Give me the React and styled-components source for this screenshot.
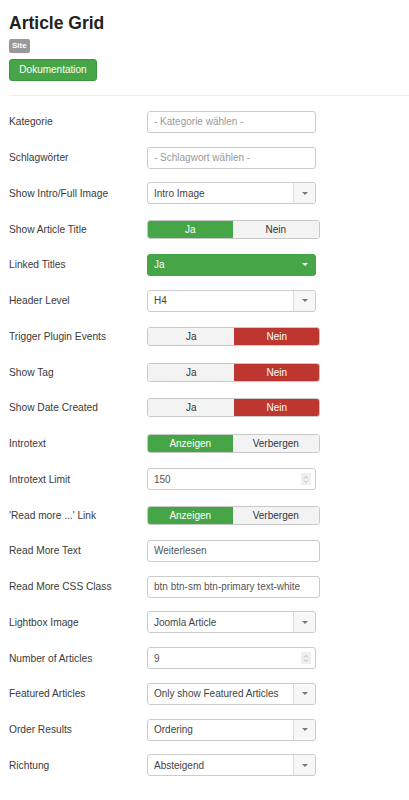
import React from 'react';
import styled, {createGlobalStyle} from 'styled-components';

const Global = createGlobalStyle`
    html, body { margin: 0; padding: 0; background: #fff; }
    body { font-family: "Liberation Sans", Arial, sans-serif; color: #333; }
`;

const Page = styled.div`
    width: 409px;
    padding: 12px 0 0 9px;
    box-sizing: border-box;
`;

const Title = styled.h1`
    margin: 0;
    font-size: 17.5px;
    line-height: 22px;
    font-weight: bold;
    color: #222;
`;

const Badge = styled.span`
    display: inline-block;
    margin-top: 2px;
    padding: 0 3px;
    height: 14px;
    line-height: 14px;
    border-radius: 2px;
    background: #999;
    color: #fff;
    font-size: 8px;
    font-weight: bold;
`;

const DocButton = styled.div`
    margin-top: 6px;
    width: 88px;
    height: 22px;
    line-height: 20px;
    text-align: center;
    border-radius: 3px;
    background: #46a546;
    border: 1px solid #3d963d;
    box-sizing: border-box;
    color: #fff;
    font-size: 10px;
`;

const Divider = styled.hr`
    margin: 14px 0 0 0;
    border: 0;
    border-top: 1px solid #eee;
`;

const Form = styled.div`
    display: flex;
    flex-direction: column;
    margin-top: 8px;
`;

const Row = styled.div`
    display: flex;
    align-items: center;
    height: 35.75px;
`;

const Label = styled.div`
    width: 138px;
    font-size: 10.2px;
    color: #3a3a3a;
`;

const Input = styled.div`
    width: ${p => p.$w || 169}px;
    height: 22px;
    box-sizing: border-box;
    border: 1px solid #ccc;
    border-radius: 3px;
    background: #fff;
    display: flex;
    align-items: center;
    padding-left: 6px;
    font-size: 10px;
    color: ${p => (p.$placeholder ? '#999' : '#555')};
    position: relative;
`;

const Select = styled.div`
    width: 169px;
    height: 22px;
    box-sizing: border-box;
    border: 1px solid ${p => (p.$green ? '#46a546' : '#ccc')};
    border-radius: 3px;
    background: ${p => (p.$green ? '#46a546' : '#fff')};
    color: ${p => (p.$green ? '#fff' : '#444')};
    display: flex;
    font-size: 10px;
`;

const SelectValue = styled.div`
    flex: 1;
    display: flex;
    align-items: center;
    padding-left: 6px;
`;

const SelectArrow = styled.div`
    width: 21px;
    display: flex;
    align-items: center;
    justify-content: center;
    background: ${p => (p.$green ? 'transparent' : '#f7f7f7')};
    border-left: 1px solid ${p => (p.$green ? 'transparent' : '#ddd')};
    border-radius: 0 3px 3px 0;
    &::after {
        content: '';
        border-left: 3px solid transparent;
        border-right: 3px solid transparent;
        border-top: 3px solid ${p => (p.$green ? '#fff' : '#777')};
    }
`;

const Toggle = styled.div`
    width: 173px;
    height: 19px;
    display: flex;
    border-radius: 3px;
    overflow: hidden;
    box-sizing: border-box;
    border: 1px solid #c8c8c8;
    font-size: 10px;
`;

const Half = styled.div`
    flex: 1;
    display: flex;
    align-items: center;
    justify-content: center;
    background: ${p => p.$bg};
    color: ${p => (p.$active ? '#fff' : '#333')};
    margin: ${p => (p.$active ? '-1px' : '0')};
`;

const Spinner = styled.div`
    position: absolute;
    right: 4px;
    top: 4px;
    width: 10px;
    height: 12px;
    background: #f0f0f0;
    display: flex;
    align-items: center;
    justify-content: center;
`;

const fields = [
    {label: 'Kategorie', type: 'input', value: '- Kategorie wählen -', placeholder: true},
    {label: 'Schlagwörter', type: 'input', value: '- Schlagwort wählen -', placeholder: true},
    {label: 'Show Intro/Full Image', type: 'select', value: 'Intro Image'},
    {label: 'Show Article Title', type: 'toggle', on: 'Ja', off: 'Nein', state: 'on'},
    {label: 'Linked Titles', type: 'select', value: 'Ja', green: true},
    {label: 'Header Level', type: 'select', value: 'H4'},
    {label: 'Trigger Plugin Events', type: 'toggle', on: 'Ja', off: 'Nein', state: 'off'},
    {label: 'Show Tag', type: 'toggle', on: 'Ja', off: 'Nein', state: 'off'},
    {label: 'Show Date Created', type: 'toggle', on: 'Ja', off: 'Nein', state: 'off'},
    {label: 'Introtext', type: 'toggle', on: 'Anzeigen', off: 'Verbergen', state: 'on'},
    {label: 'Introtext Limit', type: 'number', value: '150'},
    {label: "'Read more ...' Link", type: 'toggle', on: 'Anzeigen', off: 'Verbergen', state: 'on'},
    {label: 'Read More Text', type: 'input', value: 'Weiterlesen', w: 173},
    {label: 'Read More CSS Class', type: 'input', value: 'btn btn-sm btn-primary text-white', w: 173},
    {label: 'Lightbox Image', type: 'select', value: 'Joomla Article'},
    {label: 'Number of Articles', type: 'number', value: '9'},
    {label: 'Featured Articles', type: 'select', value: 'Only show Featured Articles'},
    {label: 'Order Results', type: 'select', value: 'Ordering'},
    {label: 'Richtung', type: 'select', value: 'Absteigend'},
];

function Control({f}) {
    if (f.type === 'select') {
        return (
            <Select $green={f.green}>
                <SelectValue>{f.value}</SelectValue>
                <SelectArrow $green={f.green} />
            </Select>
        );
    }
    if (f.type === 'toggle') {
        const on = f.state === 'on';
        return (
            <Toggle>
                <Half $active={on} $bg={on ? '#46a546' : '#f3f3f3'}>{f.on}</Half>
                <Half $active={!on} $bg={!on ? '#bd362f' : '#f3f3f3'}>{f.off}</Half>
            </Toggle>
        );
    }
    if (f.type === 'number') {
        return (
            <Input>
                {f.value}
                <Spinner>
                    <svg width="6" height="9" viewBox="0 0 6 9">
                        <path d="M1 3.5 L3 1.5 L5 3.5 M1 5.5 L3 7.5 L5 5.5" stroke="#aaa" strokeWidth="0.8" fill="none" />
                    </svg>
                </Spinner>
            </Input>
        );
    }
    return <Input $w={f.w} $placeholder={f.placeholder}>{f.value}</Input>;
}

export default function App() {
    return (
        <Page>
            <Global />
            <Title>Article Grid</Title>
            <Badge>Site</Badge>
            <DocButton>Dokumentation</DocButton>
            <Divider />
            <Form>
                {fields.map(f => (
                    <Row key={f.label}>
                        <Label>{f.label}</Label>
                        <Control f={f} />
                    </Row>
                ))}
            </Form>
        </Page>
    );
}
